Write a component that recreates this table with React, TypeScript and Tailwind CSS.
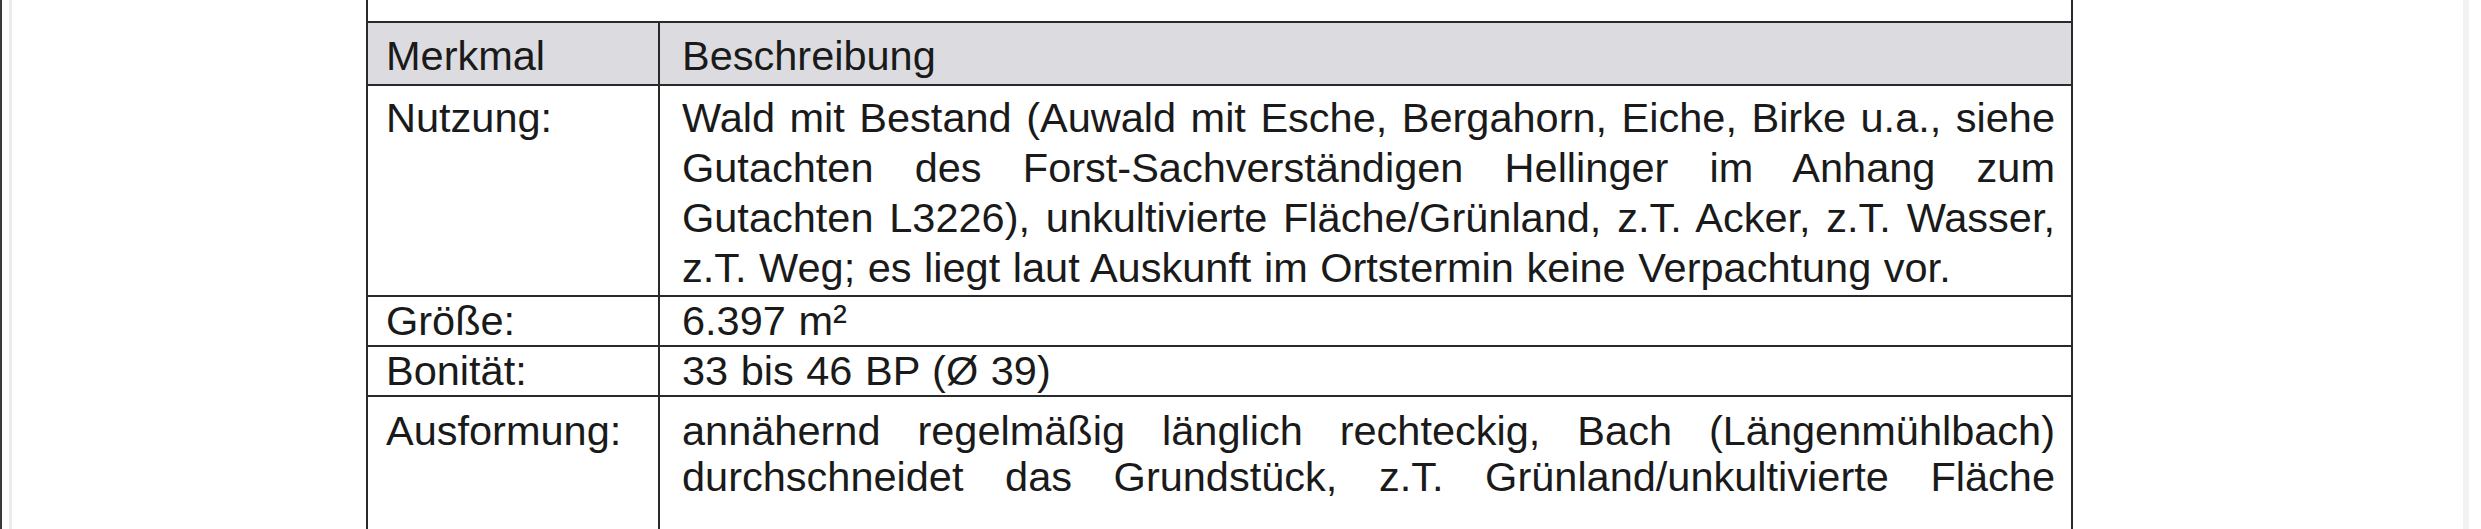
const rows = [
  {
    label: 'Nutzung:',
    pad: 'pt-[7px] pb-[2px] leading-[50px]',
    lines: [
      'Wald mit Bestand (Auwald mit Esche, Bergahorn, Eiche, Birke u.a., siehe',
      'Gutachten des Forst-Sachverständigen Hellinger im Anhang zum',
      'Gutachten L3226), unkultivierte Fläche/Grünland, z.T. Acker, z.T. Wasser,',
      'z.T. Weg; es liegt laut Auskunft im Ortstermin keine Verpachtung vor.',
    ],
    justifyLast: false,
  },
  { label: 'Größe:', pad: 'py-0 leading-[48px]', lines: ['6.397 m²'], justifyLast: false },
  { label: 'Bonität:', pad: 'py-0 leading-[48px]', lines: ['33 bis 46 BP (Ø 39)'], justifyLast: false },
  {
    label: 'Ausformung:',
    pad: 'pt-[11px] pb-[60px] leading-[46px]',
    lines: [
      'annähernd regelmäßig länglich rechteckig, Bach (Längenmühlbach)',
      'durchschneidet das Grundstück, z.T. Grünland/unkultivierte Fläche',
    ],
    justifyLast: true,
  },
];

export default function App() {
  return (
    <div
      className="flex w-[2481px] h-[529px] overflow-hidden bg-white text-[#1a1a1a] text-[41.5px] leading-[50px]"
      style={{ fontFamily: '"Liberation Sans", Arial, sans-serif' }}
    >
      {/* scan edges */}
      <div className="w-[2px] shrink-0 bg-[#3a3a3a]" />
      <div className="w-[3px] shrink-0 ml-[7px] bg-[#ececec]" />

      <div className="ml-[354px] w-[1707px] shrink-0 flex flex-col">
        <div className="h-[21px] shrink-0 border-x-2 border-[#2a2a2a]" />
        <table className="w-full table-fixed border-collapse">
          <colgroup>
            <col className="w-[292px]" />
            <col />
          </colgroup>
          <thead>
            <tr className="bg-[#dcdce0]">
              <th className="border-2 border-[#2a2a2a] pt-[8px] pb-[3px] pl-[18px] text-left font-normal align-top">
                Merkmal
              </th>
              <th className="border-2 border-[#2a2a2a] pt-[8px] pb-[3px] pl-[22px] text-left font-normal align-top">
                Beschreibung
              </th>
            </tr>
          </thead>
          <tbody>
            {rows.map((r) => (
              <tr key={r.label}>
                <td className={`border-2 border-[#2a2a2a] ${r.pad} pl-[18px] align-top`}>
                  <span className="block">{r.label}</span>
                </td>
                <td className={`border-2 border-[#2a2a2a] ${r.pad} pl-[22px] pr-[16px] align-top`}>
                  {r.lines.map((l, i) => {
                    const last = i === r.lines.length - 1;
                    return (
                      <span
                        key={i}
                        className={
                          !last || r.justifyLast
                            ? 'block whitespace-nowrap text-justify [text-align-last:justify]'
                            : 'block [word-spacing:1px]'
                        }
                      >
                        {l}
                      </span>
                    );
                  })}
                </td>
              </tr>
            ))}
          </tbody>
        </table>
      </div>

      <div className="w-[6px] shrink-0 ml-auto mr-[12px] bg-[#f2f2f2]" />
    </div>
  );
}
